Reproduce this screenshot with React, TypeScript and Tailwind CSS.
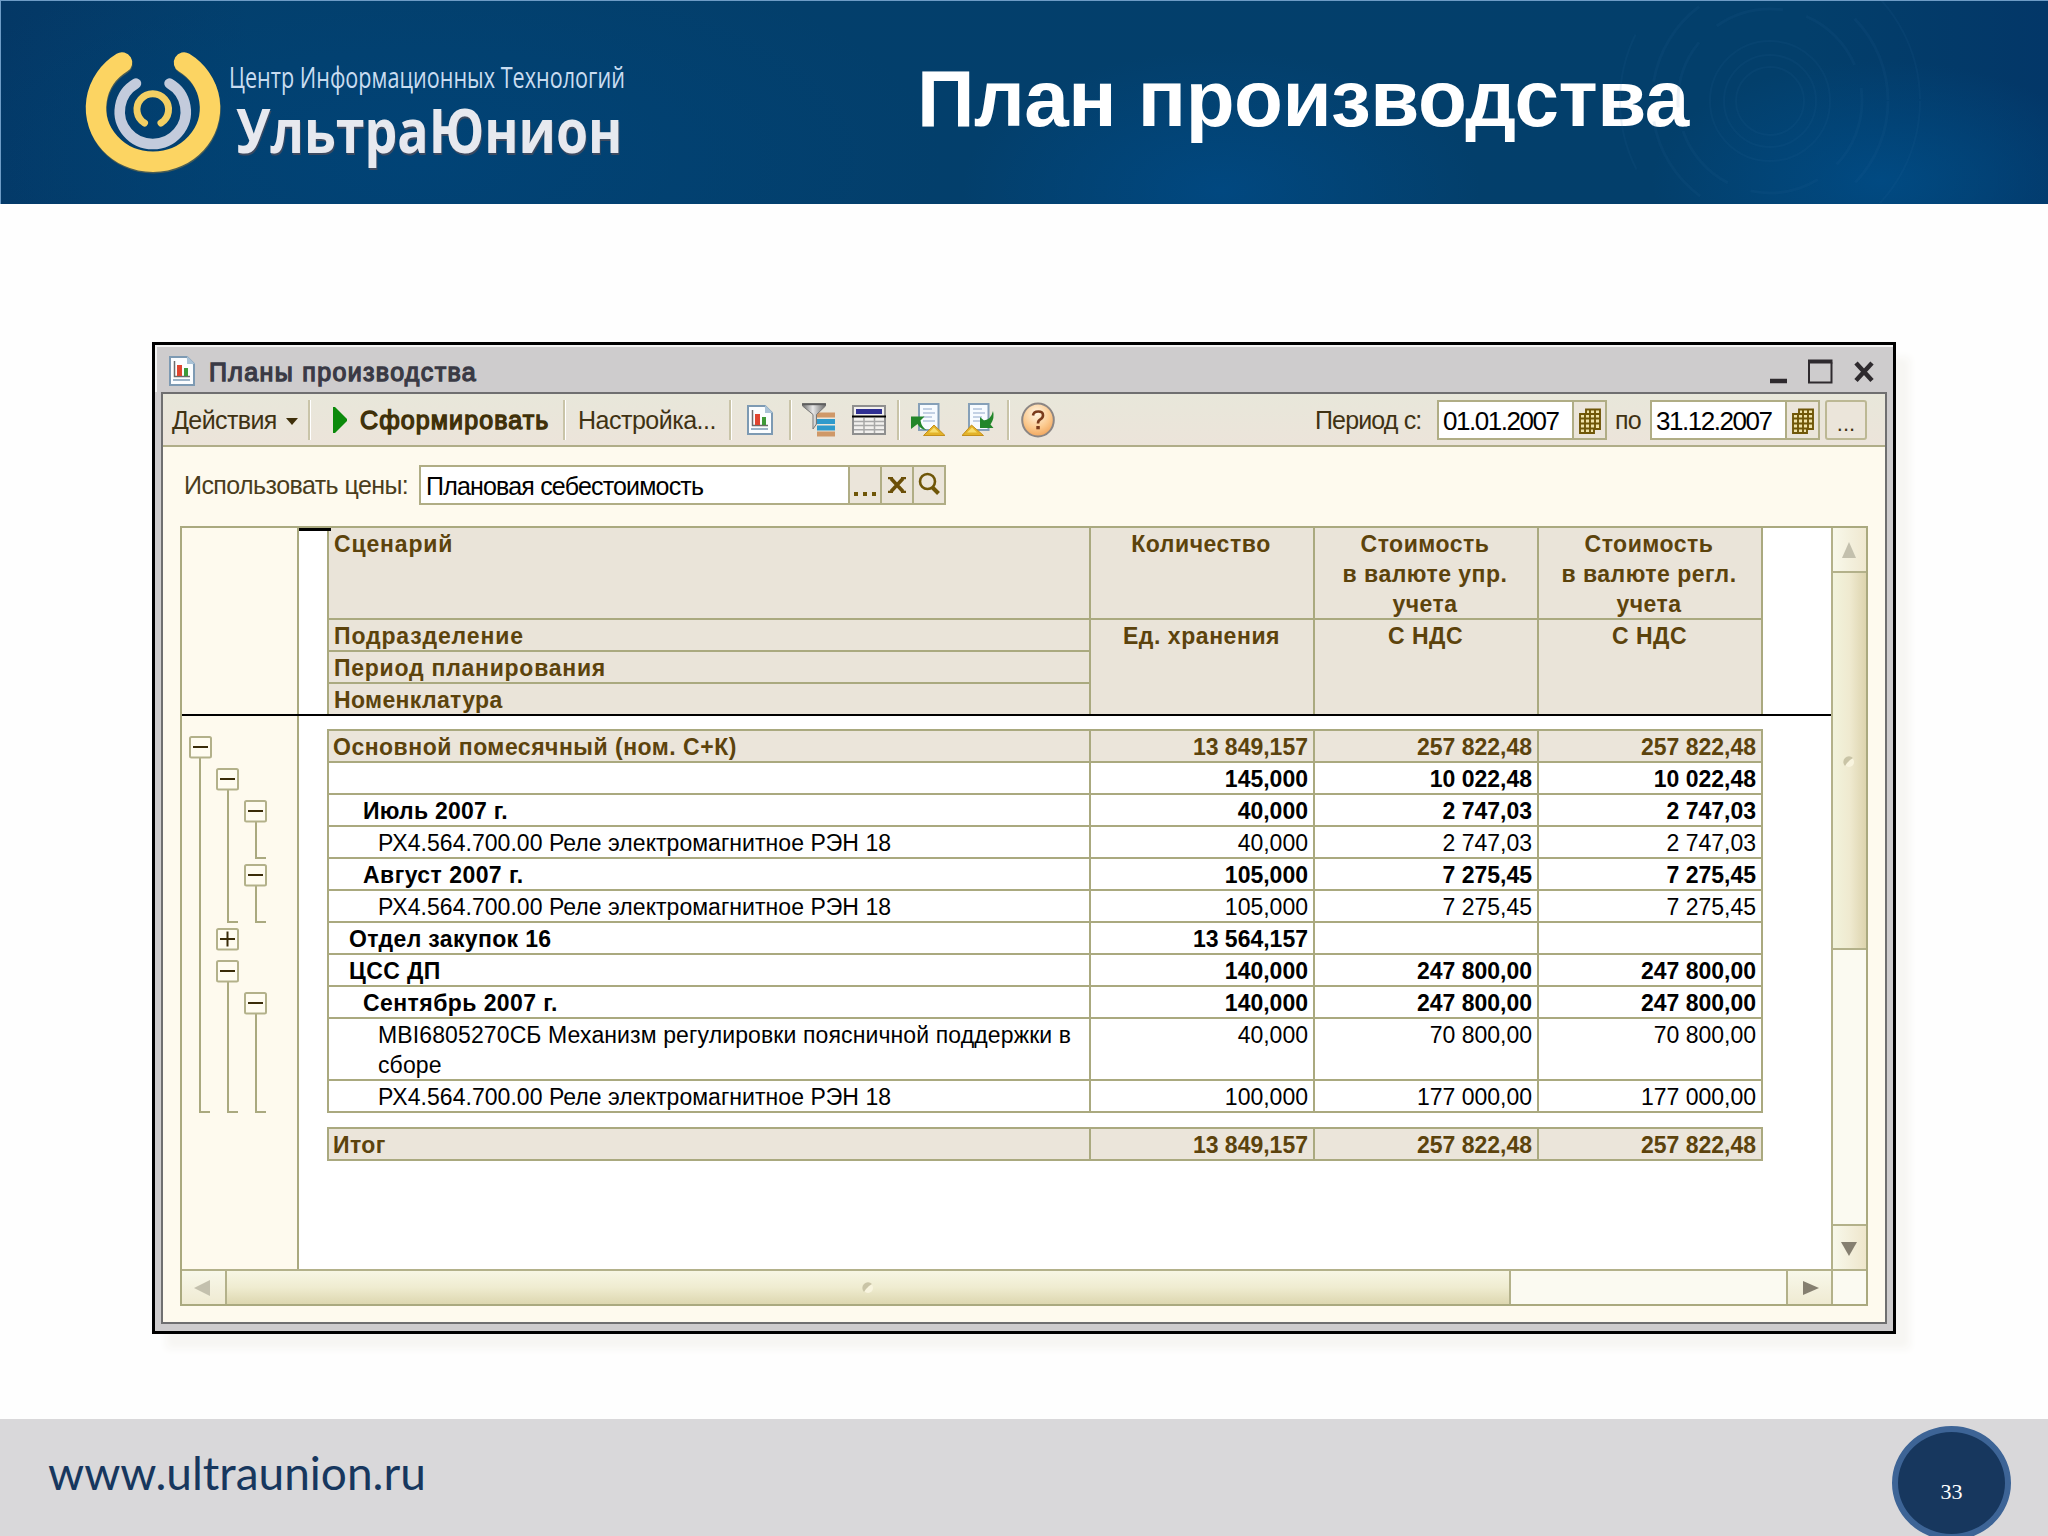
import type { ReactNode } from 'react'

type Row = {
  name: string
  pad: string
  values: [string, string, string]
  bold?: boolean
  group?: boolean
  tall?: boolean
  track?: string
}

const rows: Row[] = [
  { name: 'Основной помесячный (ном. С+К)', pad: 'pl-[4px]', values: ['13 849,157', '257 822,48', '257 822,48'], bold: true, group: true, track: 'tracking-[0.5px]' },
  { name: '', pad: 'pl-[4px]', values: ['145,000', '10 022,48', '10 022,48'], bold: true },
  { name: 'Июль 2007 г.', pad: 'pl-[34px]', values: ['40,000', '2 747,03', '2 747,03'], bold: true, track: 'tracking-[0.25px]' },
  { name: 'РХ4.564.700.00 Реле электромагнитное РЭН 18', pad: 'pl-[49px]', values: ['40,000', '2 747,03', '2 747,03'], track: 'tracking-[0.04px]' },
  { name: 'Август 2007 г.', pad: 'pl-[34px]', values: ['105,000', '7 275,45', '7 275,45'], bold: true, track: 'tracking-[0.45px]' },
  { name: 'РХ4.564.700.00 Реле электромагнитное РЭН 18', pad: 'pl-[49px]', values: ['105,000', '7 275,45', '7 275,45'], track: 'tracking-[0.04px]' },
  { name: 'Отдел закупок 16', pad: 'pl-[20px]', values: ['13 564,157', '', ''], bold: true, track: 'tracking-[0.35px]' },
  { name: 'ЦСС ДП', pad: 'pl-[20px]', values: ['140,000', '247 800,00', '247 800,00'], bold: true, track: 'tracking-[0.4px]' },
  { name: 'Сентябрь 2007 г.', pad: 'pl-[34px]', values: ['140,000', '247 800,00', '247 800,00'], bold: true, track: 'tracking-[0.43px]' },
  { name: 'МВI6805270СБ Механизм регулировки поясничной поддержки в сборе', pad: 'pl-[49px]', values: ['40,000', '70 800,00', '70 800,00'], tall: true, track: 'tracking-[0.12px]' },
  { name: 'РХ4.564.700.00 Реле электромагнитное РЭН 18', pad: 'pl-[49px]', values: ['100,000', '177 000,00', '177 000,00'], track: 'tracking-[0.04px]' },
]

const total: Row = { name: 'Итог', pad: 'pl-[4px]', values: ['13 849,157', '257 822,48', '257 822,48'], bold: true, group: true, track: 'tracking-[0.4px]' }

// expand / collapse boxes: x, y, collapsed
const nodes: [number, number, boolean][] = [
  [7, 20, false],
  [34, 52, false],
  [62, 84, false],
  [62, 148, false],
  [34, 212, true],
  [34, 244, false],
  [62, 276, false],
]

// brackets under the boxes: x, top, bottom
const stems: [number, number, number][] = [
  [18, 42, 396],
  [46, 74, 206],
  [74, 106, 142],
  [74, 170, 206],
  [46, 266, 396],
  [74, 298, 396],
]

function Logo() {
  return (
    <svg width="640" height="202" viewBox="1 1 640 202" fill="none" strokeLinecap="round">
      <path d="M122.500 64A57 54 0 1 0 184.500 64" stroke="#8f7a3a" strokeWidth="20.5" opacity=".5" />
      <path d="M122 62.500A57 54 0 1 0 184 62.500" stroke="#fcd462" strokeWidth="20.500" />
      <path d="M136 83.500A33 32.500 0 1 0 169.500 83.500" stroke="#c3cbdc" strokeWidth="10.500" />
      <path d="M144.500 123A15.800 15.800 0 1 1 161 123" stroke="#f3cf63" strokeWidth="7" />
      <text transform="translate(229 88) scale(.733 1)" fill="#c9dcf0" fontFamily="'Open Sans', sans-serif" fontSize="29.500">Центр Информационных Технологий</text>
      <text transform="translate(236 152.5) scale(.851 1)" fill="#e7e9ef" fontFamily="'Open Sans', sans-serif" fontWeight="700" fontSize="61" className="drop-shadow-[1px_2px_0px_#3d4a60]">УльтраЮнион</text>
    </svg>
  )
}

function Rings() {
  return (
    <svg width="500" height="202" viewBox="0 0 500 202" fill="none" stroke="#2f6f9f" strokeOpacity=".1" strokeWidth="2" className="absolute right-0 top-0">
      <circle cx="222" cy="100" r="34" />
      <circle cx="222" cy="100" r="46" />
      <circle cx="222" cy="100" r="60" />
      <circle cx="222" cy="100" r="92" strokeWidth="3" strokeDasharray="70 24" />
      <circle cx="222" cy="100" r="118" strokeWidth="3" strokeDasharray="90 40" />
      <circle cx="222" cy="100" r="150" strokeDasharray="140 60" />
    </svg>
  )
}

function ReportIcon() {
  return (
    <svg width="26" height="30" viewBox="0 0 26 30" className="shrink-0">
      <path d="M1 1h17l7 7v21H1z" fill="#fbfdff" stroke="#7d9ab3" strokeWidth="2" />
      <path d="M18 0l8 8h-8z" fill="#a9c2d6" />
      <path d="M5.500 5v15.500H21" fill="none" stroke="#6c6c6c" strokeWidth="1.500" />
      <path d="M8 9h5v11H8z" fill="#e04530" />
      <path d="M15 12h4v8h-4z" fill="#3f9a3a" />
      <path d="M4 24h17" stroke="#9db4c8" strokeWidth="2" />
    </svg>
  )
}

function FilterIcon() {
  return (
    <svg width="34" height="34" viewBox="0 0 34 34" className="shrink-0">
      <defs>
        <linearGradient id="funnel" x1="0" x2="1">
          <stop offset="0" stopColor="#6d6d6d" />
          <stop offset=".45" stopColor="#e8e8e8" />
          <stop offset="1" stopColor="#6a6a6a" />
        </linearGradient>
      </defs>
      <path d="M14 9.500h19v5H14zM15 28.500h18v5H15z" fill="#cf9868" />
      <path d="M15 16h18v5H15zM15 22.500h18v5H15z" fill="#2f9acb" />
      <path d="M.5 1h23v2l-9 8.500V21l-3.500 5V11.500L.5 3z" fill="url(#funnel)" stroke="#777" strokeWidth="1" />
      <path d="M0 1.200h24" stroke="#5e5e5e" strokeWidth="2" />
    </svg>
  )
}

function TableIcon() {
  return (
    <svg width="34" height="30" viewBox="0 0 34 30" className="shrink-0">
      <path d="M1 1h32v28H1z" fill="#f2f0ee" stroke="#8f8f8f" strokeWidth="2" />
      <path d="M4 4h26v5H4z" fill="#2f2f93" />
      <path d="M0 11.500h34" stroke="#000" strokeWidth="2" />
      <path d="M2 16.500h30M2 20.500h30M2 24.800h30M12 13v15M22.500 13v15" stroke="#a8a8a8" strokeWidth="1.500" />
    </svg>
  )
}

function SheetArrowIcon({ restore }: { restore?: boolean }) {
  const page = restore ? 'translate(6 0)' : 'translate(7 0)'
  return (
    <svg width="34" height="34" viewBox="0 0 34 34" className="shrink-0">
      <g transform={page}>
        <path d="M1 1h19.500v26H1z" fill="#f7fbff" stroke="#86a0b8" strokeWidth="2" />
        <path d="M5 6h9M5 10h12M5 14h9M5 18h12" stroke="#b2c3dc" strokeWidth="1.500" />
      </g>
      {restore ? (
        <>
          <path d="M18 14l4 3.500q7-1 9-9.500q2 7-2.500 13.500l3 3.500H18z" fill="#23862a" />
          <path d="M0 32.500L9.500 22l12 10.500z" fill="#e3b32a" stroke="#c48f1c" strokeWidth="1" />
          <path d="M5 29.500l5-5 5 5z" fill="#f7dd6c" />
        </>
      ) : (
        <>
          <path d="M0 13.500h13.500l-4 4q1 6.500 6 9.500-6-.5-9-6L0 26z" fill="#23862a" />
          <path d="M12.500 32.500L23 22l11 10.500z" fill="#e3b32a" stroke="#c48f1c" strokeWidth="1" />
          <path d="M18 29.500l5-5 5 5z" fill="#f7dd6c" />
        </>
      )}
    </svg>
  )
}

function HelpIcon() {
  return (
    <svg width="34" height="36" viewBox="0 0 34 36" className="shrink-0">
      <defs>
        <radialGradient id="help" cx=".45" cy=".3" r=".75">
          <stop offset="0" stopColor="#fff6e4" />
          <stop offset=".6" stopColor="#fbc88c" />
          <stop offset="1" stopColor="#f0a055" />
        </radialGradient>
      </defs>
      <ellipse cx="17" cy="18" rx="15.800" ry="16.500" fill="url(#help)" stroke="#8c8684" strokeWidth="2" />
      <path d="M12 13.500q.5-4 5.300-4 4.700 0 4.700 3.700 0 2.700-2.700 4.200-2.300 1.300-2.300 4" fill="none" stroke="#7a3b1c" strokeWidth="2.600" />
      <path d="M15.300 24h3.500v3.300h-3.500z" fill="#7a3b1c" />
    </svg>
  )
}

function CalendarIcon() {
  return (
    <svg width="22" height="26" viewBox="0 0 22 26" className="mt-[2px]">
      <path d="M7 1h14v20h-6v4H1V6h6z" fill="#efe2a8" />
      <path d="M7 1.500h14v19.500h-6v4H1V6h6zM1 10.500h20M1 15.500h20M1 20.500h15M7 6h14M6 6v19M11 1v24M16 1v20" fill="none" stroke="#6f5608" strokeWidth="1.900" />
    </svg>
  )
}

function Separator({ className }: { className?: string }) {
  return <div className={`h-[40px] w-[3px] shrink-0 border-l-2 border-r border-l-[#c9c4a8] border-r-white ${className ?? ''}`} />
}

function FieldButton({ children, className }: { children: ReactNode; className?: string }) {
  return (
    <div className={`flex h-full items-center justify-center border-l-2 border-[#b0ad85] bg-[#ebe5da] ${className ?? ''}`}>
      {children}
    </div>
  )
}

function DateField({ value }: { value: string }) {
  return (
    <div className="flex h-[40px] w-[170px] shrink-0 border-2 border-[#b0ad85] bg-white">
      <div className="flex flex-1 items-center pl-[4px] pt-[2px] text-[26px] tracking-[-1.45px] text-black">{value}</div>
      <FieldButton className="w-[33px]">
        <CalendarIcon />
      </FieldButton>
    </div>
  )
}

function Toolbar() {
  return (
    <div className="flex h-[53px] shrink-0 items-center border-b-2 border-[#b0ad88] bg-linear-to-b from-[#e8e7da] to-[#ece4da] pl-[8px] pr-[18px] pt-[1px] text-[25px] text-[#3f3213]">
      <span className="w-[115px] shrink-0 pl-px pt-px tracking-[-0.6px]">Действия</span>
      <svg width="12" height="7" className="mt-[3px] shrink-0">
        <path d="M0 0h12L6 7z" fill="#3f2f0a" />
      </svg>
      <Separator className="ml-[10px]" />
      <svg width="14" height="26" className="ml-[22px] shrink-0">
        <path d="M0 0h2l12 12v2L2 26H0z" fill="#0b8a0b" />
      </svg>
      <span className="ml-[13px] w-[203px] shrink-0 pt-px tracking-[1.1px] [-webkit-text-stroke:1.3px_#3f3006]">Сформировать</span>
      <Separator />
      <span className="ml-[12px] w-[151px] shrink-0 pt-px tracking-[-0.5px]">Настройка...</span>
      <Separator />
      <div className="ml-[15px]"><ReportIcon /></div>
      <Separator className="ml-[16px]" />
      <div className="ml-[10px]"><FilterIcon /></div>
      <div className="ml-[16px]"><TableIcon /></div>
      <Separator className="ml-[11px]" />
      <div className="ml-[11px]"><SheetArrowIcon /></div>
      <div className="ml-[17px]"><SheetArrowIcon restore /></div>
      <Separator className="ml-[11px]" />
      <div className="ml-[11px]"><HelpIcon /></div>
      <div className="ml-auto flex items-center">
        <span className="w-[123px] pl-px pt-[2px] tracking-[-0.85px]">Период с:</span>
        <DateField value="01.01.2007" />
        <span className="ml-[7px] w-[36px] pl-px pt-[2px] tracking-[-0.8px]">по</span>
        <DateField value="31.12.2007" />
        <div className="ml-[5px] flex h-[40px] w-[42px] items-center justify-center rounded-[3px] border-2 border-[#bcb894] bg-[#ebe5da] pt-1.5 text-[22px]">...</div>
      </div>
    </div>
  )
}

function PriceRow() {
  return (
    <div className="flex h-[79px] shrink-0 pl-[20px] pt-[18px] text-[25px]">
      <span className="w-[236px] pl-px leading-[41px] tracking-[-0.57px] text-[#4a3d1c]">Использовать цены:</span>
      <div className="flex h-[40px] w-[527px] border-2 border-[#b0ad85] bg-white">
        <div className="flex-1 pl-[5px] leading-[38px] tracking-[-0.82px] text-black">Плановая себестоимость</div>
        <FieldButton className="w-[32px]">
          <svg width="24" height="26" fill="#6f5608">
            <path d="M1 20h4v4H1zM10 20h4v4h-4zM19 20h4v4h-4z" />
          </svg>
        </FieldButton>
        <FieldButton className="w-[32px]">
          <svg width="18" height="16" fill="none" stroke="#6b4f08">
            <path d="M3 1.500l12 13M15 1.500l-12 13" strokeWidth="3.600" />
            <path d="M0 1.200h5M13 1.200h5M0 14.800h5M13 14.800h5" strokeWidth="2.200" />
          </svg>
        </FieldButton>
        <FieldButton className="w-[32px]">
          <svg width="22" height="24" fill="none" stroke="#6f5608" className="mb-[3px]">
            <circle cx="9.500" cy="9.500" r="7.500" strokeWidth="2.600" />
            <path d="M14.500 15.500l6 6" strokeWidth="4" />
          </svg>
        </FieldButton>
      </div>
    </div>
  )
}

function HeadCell({ title, sub, track }: { title: ReactNode; sub: string; track: string }) {
  return (
    <div className={`w-[224px] border-r-2 border-[#aaa97f] text-center ${track}`}>
      <div className="h-[92px] border-b-2 border-[#aaa97f] pr-[2px] pt-[1px]">{title}</div>
      <div className="pr-[1px] pt-[1px]">{sub}</div>
    </div>
  )
}

function TableHead() {
  return (
    <div className="flex h-[186px] w-[1436px] bg-[#eae4d9] text-[23px] font-bold leading-[30px] text-[#5c430c]">
      <div className="w-[764px] border-x-2 border-[#aaa97f]">
        <div className="h-[92px] border-b-2 border-[#aaa97f] pl-[5px] pt-[1px] tracking-[0.85px]">Сценарий</div>
        <div className="h-[32px] border-b-2 border-[#aaa97f] pl-[5px] pt-[1px] tracking-[0.85px]">Подразделение</div>
        <div className="h-[32px] border-b-2 border-[#aaa97f] pl-[5px] pt-[1px] tracking-[0.75px]">Период планирования</div>
        <div className="h-[30px] pl-[5px] pt-[1px] tracking-[0.35px]">Номенклатура</div>
      </div>
      <HeadCell title="Количество" sub="Ед. хранения" track="tracking-[0.55px]" />
      <HeadCell title={<>Стоимость<br />в валюте упр.<br />учета</>} sub="С НДС" track="tracking-[0.5px]" />
      <HeadCell title={<>Стоимость<br />в валюте регл.<br />учета</>} sub="С НДС" track="tracking-[0.5px]" />
    </div>
  )
}

function TableRow({ row }: { row: Row }) {
  const tone = row.group ? 'bg-[#ebe5da] text-[#5c430c]' : 'bg-white text-black'
  return (
    <div className={`flex border-b-2 border-[#aaa97f] ${row.tall ? 'h-[62px]' : 'h-[32px]'} ${tone} ${row.bold ? 'font-bold' : ''}`}>
      <div className={`w-[764px] border-x-2 border-[#aaa97f] pt-[1px] ${row.pad} ${row.track ?? ''}`}>{row.name}</div>
      {row.values.map((v, i) => (
        <div key={i} className="w-[224px] border-r-2 border-[#aaa97f] pr-[5px] pt-[1px] text-right">{v}</div>
      ))}
    </div>
  )
}

function Tree() {
  return (
    <svg width="115" height="553" fill="none" className="block">
      {stems.map(([x, top, bottom], i) => (
        <path key={i} d={`M${x} ${top}V${bottom}H${x + 10}`} stroke="#aaa97f" strokeWidth="2" />
      ))}
      {nodes.map(([x, y, collapsed], i) => (
        <g key={i}>
          <rect x={x + 1} y={y + 1} width="21" height="20.500" rx="1.500" fill="#fffcf0" stroke="#b3b18a" strokeWidth="2" />
          <path d={`M${x + 4} ${y + 11}h15${collapsed ? `M${x + 11.5} ${y + 3.5}v15` : ''}`} stroke="#3a2c08" strokeWidth="2" />
        </g>
      ))}
    </svg>
  )
}

function Grip() {
  return (
    <svg width="12" height="12">
      <circle cx="6" cy="6" r="5" fill="#f8f4de" />
      <path d="M2 10a5 5 0 0 1 8-8l-3 2-3 3z" fill="#c9c4a6" />
    </svg>
  )
}

function VerticalScroll() {
  return (
    <div className="flex w-[35px] shrink-0 flex-col border-l-2 border-[#b3b18a] bg-[#fbfaf1]">
      <div className="flex h-[45px] items-center justify-center border-b-2 border-[#b3b18a] bg-linear-to-r from-[#f8f8ea] to-[#efe8d0] pr-[2px]">
        <svg width="14" height="16"><path d="M7 0l7 16H0z" fill="#c3c0ad" /></svg>
      </div>
      <div className="flex h-[377px] items-center justify-center border-b-2 border-[#b3b18a] bg-linear-to-r from-[#f2f3dc] via-[#efead0] to-[#ddd4ae] pr-[2px] pt-[2px]">
        <Grip />
      </div>
      <div className="flex-1" />
      <div className="flex h-[45px] items-center justify-center border-t-2 border-[#b3b18a] bg-linear-to-r from-[#f8f8ea] to-[#eee6cc] pr-[2px] pt-[2px]">
        <svg width="16" height="14"><path d="M0 0h16L8 14z" fill="#857f70" /></svg>
      </div>
    </div>
  )
}

function HorizontalScroll() {
  return (
    <div className="flex h-[35px] shrink-0 border-t-2 border-[#b3b18a] bg-[#fbfaf1]">
      <div className="flex w-[45px] items-center justify-center border-r-2 border-[#b3b18a] bg-linear-to-b from-[#f8f8ea] to-[#efead2] pr-[4px]">
        <svg width="16" height="16"><path d="M0 8L16 0v16z" fill="#c3c0ad" /></svg>
      </div>
      <div className="flex w-[1284px] items-center justify-center border-r-2 border-[#b3b18a] bg-linear-to-b from-[#f7f6e4] via-[#efecd0] to-[#ddd7b0]">
        <Grip />
      </div>
      <div className="flex-1" />
      <div className="flex w-[45px] items-center justify-center border-l-2 border-[#b3b18a] bg-linear-to-b from-[#f8f8ea] to-[#efead2] pl-[2px]">
        <svg width="16" height="14"><path d="M0 0v14l16-7z" fill="#857f70" /></svg>
      </div>
      <div className="w-[35px] border-l-2 border-[#b3b18a]" />
    </div>
  )
}

function Sheet() {
  return (
    <div className="ml-[17px] flex h-[780px] w-[1688px] shrink-0 flex-col border-2 border-[#aaa97f] bg-white">
      <div className="flex h-[741px]">
        <div className="flex-1">
          <div className="flex h-[188px] border-b-2 border-black">
            <div className="w-[117px] border-r-2 border-[#aaa97f] bg-[#fefaee]" />
            <div className="relative pl-[28px]">
              <TableHead />
              <div className="absolute left-0 top-0 h-[3px] w-[32px] bg-black" />
            </div>
          </div>
          <div className="flex h-[553px]">
            <div className="w-[117px] border-r-2 border-[#aaa97f] bg-[#fefaee]">
              <Tree />
            </div>
            <div className="pl-[28px] pt-[13px] text-[23px] leading-[30px]">
              <div className="w-[1436px] border-t-2 border-[#aaa97f]">
                {rows.map((row, i) => (
                  <TableRow key={i} row={row} />
                ))}
              </div>
              <div className="mt-[14px] w-[1436px] border-t-2 border-[#aaa97f]">
                <TableRow row={total} />
              </div>
            </div>
          </div>
        </div>
        <VerticalScroll />
      </div>
      <HorizontalScroll />
    </div>
  )
}

function ReportWindow() {
  return (
    <div className="flex h-[992px] w-[1744px] flex-col border-[3px] border-black bg-[#cecccd] shadow-[14px_15px_8px_#f7f6f3]">
      <div className="flex h-[47px] shrink-0 items-center border-l-2 border-t-2 border-[#f3f3f3] pl-[12px] pr-[16px]">
        <div className="mt-[2px]"><ReportIcon /></div>
        <span className="ml-[14px] mt-[7px] text-[25px] tracking-[1.35px] text-[#3a3a45] [-webkit-text-stroke:1.3px_#3a3a45]">Планы производства</span>
        <svg width="108" height="26" className="ml-auto mt-[5px]" fill="none" stroke="#2e2a2e">
          <path d="M1 22h17" strokeWidth="4.500" />
          <path d="M40 3.500v20h22.500v-20" strokeWidth="2" />
          <path d="M39 2.500h24.500" strokeWidth="4" />
          <path d="M87 4l16 17.500M103 4l-16 17.500" strokeWidth="4.500" />
        </svg>
      </div>
      <div className="mx-[6px] flex h-[932px] shrink-0 flex-col border-2 border-[#6f6f70] bg-[#fefaee]">
        <Toolbar />
        <PriceRow />
        <Sheet />
      </div>
    </div>
  )
}

export default function App() {
  return (
    <div className="flex h-[1536px] w-[2048px] flex-col overflow-hidden bg-[#fefefe] font-['Liberation_Sans',Arial,sans-serif]">
      <header className="relative flex h-[204px] shrink-0 border-l border-t border-[#6e9cc6] bg-[#03406f] bg-[radial-gradient(ellipse_260px_140px_at_1220px_190px,#014880,transparent),radial-gradient(ellipse_230px_120px_at_1880px_180px,#014a82,transparent),radial-gradient(ellipse_520px_220px_at_420px_160px,#014376,transparent),linear-gradient(90deg,#043866,#033f6c_12%,#033f6b_88%,#033768)]">
        <Rings />
        <Logo />
        <h1 className="ml-[276px] mt-[53px] text-[80px] font-bold leading-[90px] tracking-[-0.5px] whitespace-nowrap text-white">План производства</h1>
      </header>

      <main className="flex flex-1 items-start pl-[152px] pt-[138px]">
        <ReportWindow />
      </main>

      <footer className="flex h-[117px] shrink-0 justify-between bg-[#d9d8da]">
        <span className="ml-[48px] mt-[26px] font-[Lato,sans-serif] text-[46px] leading-[56px] text-[#17375e]">www.ultraunion.ru</span>
        <div className="mr-[37px] mt-[7px] flex h-[114px] w-[119px] items-center justify-center rounded-[50%] border-[6px] border-[#3d6496] bg-[#17375e] pt-[17px]">
          <span className="font-['Liberation_Serif',serif] text-[22px] leading-none text-white">33</span>
        </div>
      </footer>
    </div>
  )
}
